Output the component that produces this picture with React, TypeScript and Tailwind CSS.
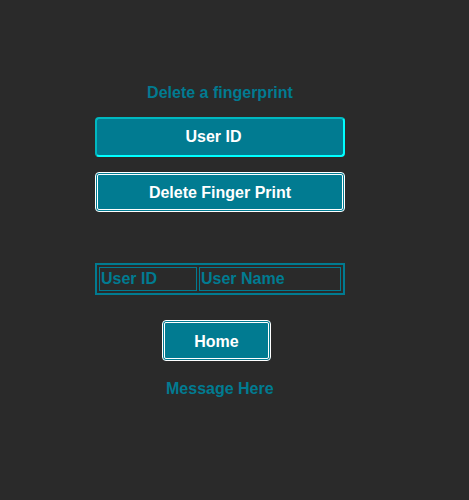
export default function App() {
  return (
    <div
      className="min-h-[500px] bg-[#2a2a2a] pt-[84px]"
      style={{ fontFamily: '"Liberation Sans", Arial, sans-serif' }}
    >
      <div className="ml-[95px] flex w-[250px] flex-col items-center">
        {/* Title */}
        <h1 className="h-[18px] text-[16px] font-bold leading-[18px] text-[#017b91]">
          Delete a fingerprint
        </h1>

        {/* User ID field */}
        <div className="mt-[15px] flex h-[40px] w-full items-center justify-center rounded-[4px] border-2 border-[#00b8c0] border-b-[#00ffff] border-r-[#00ffff] bg-[#017b91] pr-[13px] text-[16px] font-bold text-white">
          User ID
        </div>

        {/* Delete button */}
        <button className="mt-[15px] flex h-[40px] w-full items-center justify-center rounded-[4px] border-[3px] border-double border-white bg-[#017b91] pt-[2px] text-[16px] font-bold text-white">
          Delete Finger Print
        </button>

        {/* Table */}
        <table className="mt-[51px] w-full border-separate border-spacing-[2px] border-2 border-[#017b91] text-[16px] font-bold leading-[20px] text-[#017b91]">
          <tbody>
            <tr>
              <td className="w-[98px] border border-[#017b91] p-px text-left">User ID</td>
              <td className="border border-[#017b91] p-px text-left">User Name</td>
            </tr>
          </tbody>
        </table>

        {/* Home button */}
        <button className="mt-[25px] ml-[67px] flex h-[41px] w-[109px] items-center justify-center self-start rounded-[4px] border-[3px] border-double border-white bg-[#017b91] pt-[2px] text-[16px] font-bold text-white">
          Home
        </button>

        {/* Message */}
        <p className="mt-[19px] ml-[71px] self-start text-[16px] font-bold leading-[18px] text-[#017b91]">
          Message Here
        </p>
      </div>
    </div>
  );
}
